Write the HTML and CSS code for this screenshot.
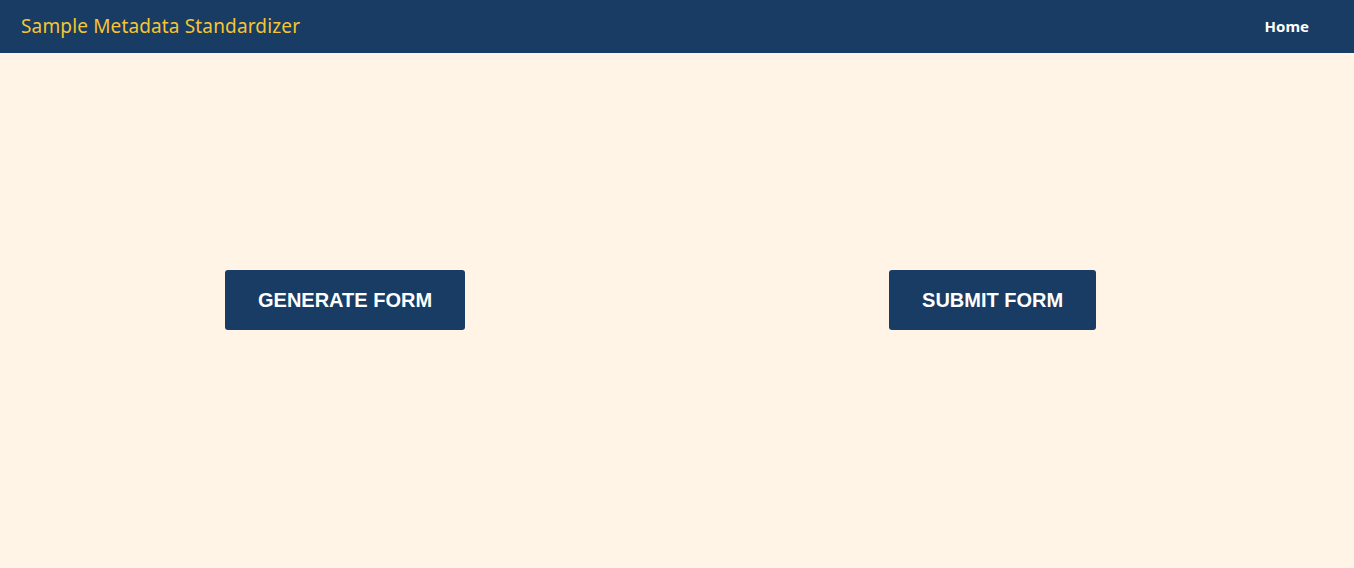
FILE: index.html
```html
<!DOCTYPE html>
<html lang="en">
<head>
<meta charset="utf-8">
<title>Sample Metadata Standardizer</title>
<link rel="stylesheet" href="styles.css">
</head>
<body>
<header class="topbar">
  <a class="brand" href="#">Sample Metadata Standardizer</a>
  <nav class="nav"><a class="nav-link" href="#">Home</a></nav>
</header>
<main class="content">
  <div class="actions">
    <button class="btn" type="button">GENERATE FORM</button>
    <button class="btn" type="button">SUBMIT FORM</button>
  </div>
</main>
</body>
</html>
```
FILE: styles.css
```css
html, body {
  margin: 0;
  padding: 0;
  height: 100%;
}
body {
  background: #fff4e6;
  font-family: "Noto Sans", "Open Sans", sans-serif;
}
.topbar {
  height: 53px;
  background: #183c63;
  display: flex;
  align-items: center;
  justify-content: space-between;
  padding: 0 45px 0 21px;
}
.brand {
  color: #f7c531;
  font-size: 19px;
  letter-spacing: 0.15px;
  text-decoration: none;
  margin-top: -2px;
}
.nav-link {
  color: #ffffff;
  font-weight: bold;
  font-size: 15px;
  text-decoration: none;
  margin-top: -2px;
  display: block;
}
.content {
  padding: 217px 0 0 225px;
}
.actions {
  display: flex;
  gap: 424px;
}
.btn {
  background: #183c63;
  color: #ffffff;
  border: none;
  border-radius: 3px;
  height: 60px;
  padding: 0 33px;
  font-family: "Liberation Sans", Arial, sans-serif;
  font-weight: bold;
  font-size: 20px;
  cursor: pointer;
}
```
